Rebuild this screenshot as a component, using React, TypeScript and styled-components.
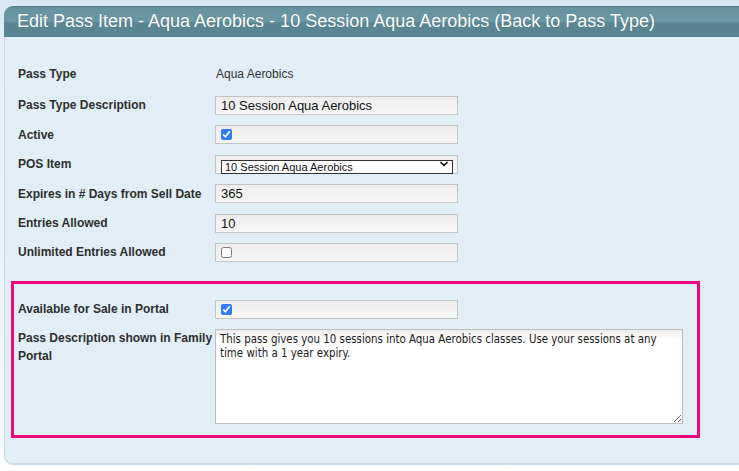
import React from "react";
import styled, { createGlobalStyle } from "styled-components";
import { ChevronDown } from "lucide-react";

const GlobalStyle = createGlobalStyle`
  html, body {
    margin: 0;
    padding: 0;
    overflow: hidden;
  }
  body {
    width: 739px;
    height: 471px;
    background: linear-gradient(#d8e7f4 0, #e2eef7 40px, #f4f8fb 440px, #ffffff 471px);
    font-family: "Liberation Sans", Arial, sans-serif;
  }
`;

const Panel = styled.div`
  margin: 6px 0 0 4px;
  height: 459px;
  box-sizing: border-box;
  background: #e1eef6;
  border-left: 1px solid #c4d9e5;
  border-bottom: 2px solid #cbdde8;
  border-radius: 9px 0 0 9px;
`;

const Header = styled.div`
  height: 31px;
  box-sizing: border-box;
  padding-left: 13px;
  margin-left: -1px;
  display: flex;
  align-items: center;
  white-space: nowrap;
  color: #ffffff;
  font-size: 18px;
  border-radius: 9px 0 0 0;
  background: linear-gradient(
    #4e7a87 0,
    #6793a0 2px,
    #6a97a4 50%,
    #5b8795 52%,
    #588392 100%
  );
  text-shadow: 0 0 1px rgba(0, 0, 0, 0.25);
`;

const Body = styled.div`
  padding: 27px 0 0 6px;
`;

const FieldList = styled.div<{ $pad?: number }>`
  display: flex;
  flex-direction: column;
  gap: 10.4px;
  padding-left: ${({ $pad }) => $pad ?? 0}px;
`;

const Row = styled.div<{ $top?: boolean; $extra?: number }>`
  display: flex;
  align-items: ${({ $top }) => ($top ? "flex-start" : "center")};
  min-height: 19px;
  margin-bottom: ${({ $extra }) => $extra ?? 0}px;
`;

const Label = styled.div`
  flex: none;
  width: 197px;
  font-size: 12px;
  font-weight: bold;
  line-height: 18px;
  color: #2e2e2e;
`;

const StaticValue = styled.div`
  font-size: 12px;
  color: #333333;
  padding-left: 1px;
`;

const FieldBox = styled.div`
  position: relative;
  width: 243px;
  height: 19px;
  box-sizing: border-box;
  border: 1px solid #c3c3c3;
  background: linear-gradient(#ececec, #f7f7f7);
  display: flex;
  align-items: center;
  padding: 0 4px 0 5px;
`;

const TextInput = styled.input`
  border: none;
  background: transparent;
  outline: none;
  padding: 0;
  width: 100%;
  font-family: "Liberation Sans", Arial, sans-serif;
  font-size: 13px;
  color: #111111;
`;

const Check = styled.input`
  margin: 0;
  width: 11px;
  height: 11px;
  accent-color: #2f7cf6;
`;

const SelectWrap = styled.div`
  position: relative;
  width: 100%;
  height: 14px;
`;

const Select = styled.select`
  appearance: none;
  width: 100%;
  height: 14px;
  box-sizing: border-box;
  border: 1px solid #333333;
  border-radius: 0;
  background: #ffffff;
  padding: 0 0 0 3px;
  font-family: "Liberation Sans", Arial, sans-serif;
  font-size: 11px;
  line-height: 12px;
  color: #111111;
  outline: none;
`;

const SelectChevron = styled(ChevronDown)`
  position: absolute;
  right: 3px;
  top: 1px;
  pointer-events: none;
  color: #111111;
`;

const PortalBox = styled.div`
  margin-top: 19px;
  width: 689px;
  box-sizing: border-box;
  border: 3px solid #f0087d;
  padding: 16px 0 11px 4px;
`;

const TextArea = styled.textarea`
  width: 468px;
  height: 95px;
  box-sizing: border-box;
  margin: 0;
  border: 1px solid #bfbfbf;
  padding: 2px 20px 2px 4px;
  background: linear-gradient(#ebebeb 0, #ffffff 10px);
  font-family: "DejaVu Sans Condensed", "DejaVu Sans", sans-serif;
  font-size: 11.4px;
  line-height: 14px;
  color: #1a1a1a;
  outline: none;
`;

type Field = { label: string; kind: "text" | "check"; value?: string; checked?: boolean };

const fields: Field[] = [
  { label: "Pass Type Description", kind: "text", value: "10 Session Aqua Aerobics" },
  { label: "Active", kind: "check", checked: true },
];

const laterFields: Field[] = [
  { label: "Expires in # Days from Sell Date", kind: "text", value: "365" },
  { label: "Entries Allowed", kind: "text", value: "10" },
  { label: "Unlimited Entries Allowed", kind: "check", checked: false },
];

const renderField = (f: Field) => (
  <Row key={f.label}>
    <Label>{f.label}</Label>
    <FieldBox>
      {f.kind === "text" ? (
        <TextInput defaultValue={f.value} />
      ) : (
        <Check type="checkbox" defaultChecked={f.checked} />
      )}
    </FieldBox>
  </Row>
);

const App: React.FC = () => {
  return (
    <>
      <GlobalStyle />
      <Panel>
        <Header>
          Edit Pass Item - Aqua Aerobics - 10 Session Aqua Aerobics (Back to Pass Type)
        </Header>
        <Body>
          <FieldList $pad={7}>
            <Row $extra={2.6}>
              <Label>Pass Type</Label>
              <StaticValue>Aqua Aerobics</StaticValue>
            </Row>
            {fields.map(renderField)}
            <Row>
              <Label>POS Item</Label>
              <FieldBox>
                <SelectWrap>
                  <Select defaultValue="10 Session Aqua Aerobics">
                    <option>10 Session Aqua Aerobics</option>
                  </Select>
                  <SelectChevron size={12} strokeWidth={3.5} />
                </SelectWrap>
              </FieldBox>
            </Row>
            {laterFields.map(renderField)}
          </FieldList>
          <PortalBox>
            <FieldList>
              <Row>
                <Label>Available for Sale in Portal</Label>
                <FieldBox>
                  <Check type="checkbox" defaultChecked />
                </FieldBox>
              </Row>
              <Row $top>
                <Label>Pass Description shown in Family Portal</Label>
                <TextArea defaultValue="This pass gives you 10 sessions into Aqua Aerobics classes. Use your sessions at any time with a 1 year expiry." />
              </Row>
            </FieldList>
          </PortalBox>
        </Body>
      </Panel>
    </>
  );
};

export default App;
